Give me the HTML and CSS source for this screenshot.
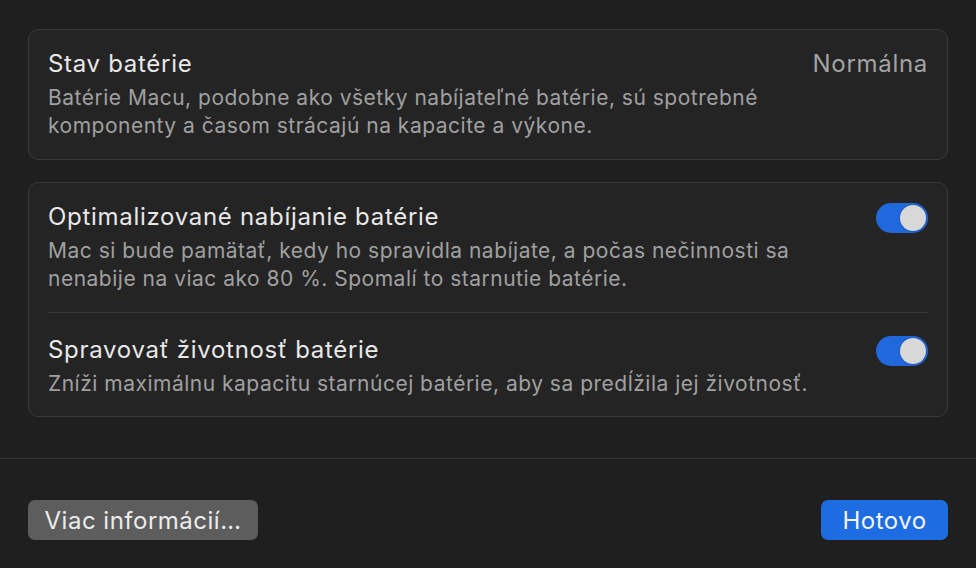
FILE: index.html
```html
<!DOCTYPE html>
<html lang="sk">
<head>
<meta charset="utf-8">
<link rel="stylesheet" href="styles.css">
</head>
<body>
<div class="sheet">
  <div class="content">
    <section class="card">
      <div class="row">
        <div class="text">
          <div class="title">Stav batérie</div>
          <div class="desc">Batérie Macu, podobne ako všetky nabíjateľné batérie, sú spotrebné<br>komponenty a časom strácajú na kapacite a výkone.</div>
        </div>
        <div class="value">Normálna</div>
      </div>
    </section>
    <section class="card">
      <div class="row row-first">
        <div class="text">
          <div class="title">Optimalizované nabíjanie batérie</div>
          <div class="desc">Mac si bude pamätať, kedy ho spravidla nabíjate, a počas nečinnosti sa<br>nenabije na viac ako 80 %. Spomalí to starnutie batérie.</div>
        </div>
        <div class="toggle on"><span class="knob"></span></div>
      </div>
      <div class="divider"></div>
      <div class="row row-second">
        <div class="text">
          <div class="title">Spravovať životnosť batérie</div>
          <div class="desc">Zníži maximálnu kapacitu starnúcej batérie, aby sa predĺžila jej životnosť.</div>
        </div>
        <div class="toggle on"><span class="knob"></span></div>
      </div>
    </section>
  </div>
  <footer class="footer">
    <button class="btn btn-gray">Viac informácií…</button>
    <button class="btn btn-blue">Hotovo</button>
  </footer>
</div>
</body>
</html>
```

FILE: styles.css
```css
* { box-sizing: border-box; }
html, body {
  margin: 0;
  padding: 0;
  background: #1f1f1f;
  width: 976px;
  height: 568px;
  overflow: hidden;
  font-family: Inter, "Noto Sans", sans-serif;
  -webkit-font-smoothing: antialiased;
}
.sheet {
  display: flex;
  flex-direction: column;
  height: 568px;
}
.content {
  padding: 29px 28px 0 28px;
  display: flex;
  flex-direction: column;
  gap: 22px;
}
.card {
  background: #242424;
  border: 1px solid #3a3a3a;
  border-radius: 10px;
  padding: 0 19px;
}
.row {
  display: flex;
  align-items: flex-start;
  justify-content: space-between;
  padding: 20px 0 19px 0;
}
.row-first { padding: 20px 0 19px 0; }
.row-second { padding: 23px 0 18px 0; }
.text {
  display: flex;
  flex-direction: column;
  gap: 6px;
}
.title {
  font-size: 24px;
  letter-spacing: 0.7px;
  line-height: 28px;
  color: #e8e8e8;
}
.desc {
  font-size: 21px;
  letter-spacing: 0.5px;
  line-height: 28px;
  color: #a0a0a0;
}
.value {
  font-size: 24px;
  letter-spacing: 0.7px;
  line-height: 28px;
  color: #a3a3a3;
}
.divider {
  height: 1px;
  background: #383838;
}
.toggle {
  width: 52px;
  height: 30px;
  border-radius: 15px;
  background: #2068dc;
  display: flex;
  align-items: center;
  justify-content: flex-end;
  padding: 0 2px;
  flex-shrink: 0;
}
.knob {
  width: 26px;
  height: 26px;
  border-radius: 50%;
  background: #d8d8d8;
  box-shadow: 0 0 2px rgba(0,0,0,0.3);
}
.footer {
  margin-top: 41px;
  border-top: 1px solid #363636;
  padding: 41px 28px 0 28px;
  display: flex;
  justify-content: space-between;
}
.btn {
  height: 40px;
  border: none;
  border-radius: 7px;
  font-family: Inter, "Noto Sans", sans-serif;
  font-size: 24px;
  letter-spacing: 0.5px;
  color: #ececec;
  padding: 0;
}
.btn-gray {
  width: 230px;
  background: #5d5d5d;
}
.btn-blue {
  width: 127px;
  background: #1d6ce2;
  color: #f4f6fb;
}
```
